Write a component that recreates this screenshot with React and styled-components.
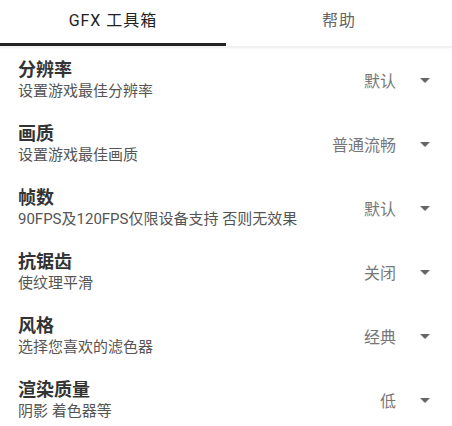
import * as React from "react";
import styled, {createGlobalStyle} from 'styled-components';

const GlobalStyles = createGlobalStyle`
  html, body {
    margin: 0;
    padding: 0;
    background: #ffffff;
    font-family: Roboto, "Noto Sans CJK SC", sans-serif;
  }
`;

const TabBar = styled.div`
  display: flex;
  height: 46px;
  box-shadow: 0 1px 2px rgba(0, 0, 0, 0.08);
  border-bottom: 1px solid #f0f0f0;
`;

const Tab = styled.div`
  flex: 1;
  display: flex;
  align-items: center;
  justify-content: center;
  padding-bottom: 6px;
  box-sizing: border-box;
  font-size: 16px;
  letter-spacing: 1px;
  color: ${({active}) => (active ? '#222' : '#666')};
  border-bottom: 3px solid ${({active}) => (active ? '#222' : 'transparent')};
`;

const List = styled.div`
  display: flex;
  flex-direction: column;
  padding-top: 1px;
`;

const Row = styled.div`
  display: flex;
  align-items: center;
  justify-content: space-between;
  height: 64px;
  padding: 0 22px 0 18px;
`;

const Texts = styled.div`
  display: flex;
  flex-direction: column;
`;

const Title = styled.div`
  font-size: 18px;
  line-height: 22px;
  font-weight: 700;
  color: #333;
`;

const Subtitle = styled.div`
  font-size: 15px;
  line-height: 20px;
  color: #555;
`;

const Picker = styled.div`
  display: flex;
  align-items: center;
  gap: 24px;
  font-size: 16px;
  color: #777;
`;

const Caret = styled.span`
  width: 0;
  height: 0;
  border-left: 5px solid transparent;
  border-right: 5px solid transparent;
  border-top: 5px solid #666;
`;

const settings = [
    {title: '分辨率', desc: '设置游戏最佳分辨率', value: '默认'},
    {title: '画质', desc: '设置游戏最佳画质', value: '普通流畅'},
    {title: '帧数', desc: '90FPS及120FPS仅限设备支持 否则无效果', value: '默认'},
    {title: '抗锯齿', desc: '使纹理平滑', value: '关闭'},
    {title: '风格', desc: '选择您喜欢的滤色器', value: '经典'},
    {title: '渲染质量', desc: '阴影 着色器等', value: '低'},
];

const App = () => {
    return (
        <>
            <GlobalStyles/>
            <TabBar>
                <Tab active>GFX 工具箱</Tab>
                <Tab>帮助</Tab>
            </TabBar>
            <List>
                {settings.map((s) => (
                    <Row key={s.title}>
                        <Texts>
                            <Title>{s.title}</Title>
                            <Subtitle>{s.desc}</Subtitle>
                        </Texts>
                        <Picker>
                            {s.value}
                            <Caret/>
                        </Picker>
                    </Row>
                ))}
            </List>
        </>
    );
};

export default App;
